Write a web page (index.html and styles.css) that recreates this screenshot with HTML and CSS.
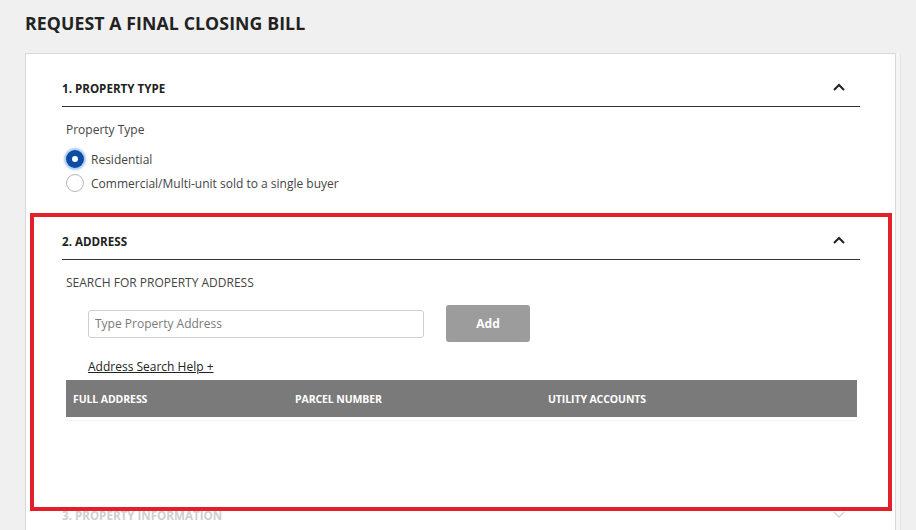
FILE: index.html
```html
<!DOCTYPE html>
<html>
<head>
<meta charset="utf-8">
<link rel="stylesheet" href="styles.css">
</head>
<body>
<div class="page">
  <h1 class="title">REQUEST A FINAL CLOSING BILL</h1>
  <div class="card">
    <section class="section">
      <div class="sec-head">
        <span>1. PROPERTY TYPE</span>
        <svg class="chev" width="12" height="8" viewBox="0 0 12 8"><polyline points="1,7 6,2 11,7" fill="none" stroke="#222" stroke-width="2"/></svg>
      </div>
      <div class="sec-body">
        <div class="label">Property Type</div>
        <div class="radios">
          <label class="radio-row"><span class="radio checked"></span><span>Residential</span></label>
          <label class="radio-row"><span class="radio"></span><span>Commercial/Multi-unit sold to a single buyer</span></label>
        </div>
      </div>
    </section>
    <section class="section section-address">
      <div class="highlight"></div>
      <div class="sec-head">
        <span>2. ADDRESS</span>
        <svg class="chev" width="12" height="8" viewBox="0 0 12 8"><polyline points="1,7 6,2 11,7" fill="none" stroke="#222" stroke-width="2"/></svg>
      </div>
      <div class="sec-body">
        <div class="label upper">SEARCH FOR PROPERTY ADDRESS</div>
        <div class="search-row">
          <input class="search-input" type="text" placeholder="Type Property Address">
          <button class="add-btn">Add</button>
        </div>
        <a class="help-link" href="#">Address Search Help +</a>
        <div class="results">
          <div class="results-head">
            <span class="col c1">FULL ADDRESS</span>
            <span class="col c2">PARCEL NUMBER</span>
            <span class="col c3">UTILITY ACCOUNTS</span>
          </div>
          <div class="results-body"></div>
        </div>
      </div>
    </section>
    <section class="section section-disabled">
      <div class="sec-head">
        <span>3. PROPERTY INFORMATION</span>
        <svg class="chev chev-down" width="12" height="8" viewBox="0 0 12 8"><polyline points="1,1 6,6 11,1" fill="none" stroke="#d4d4d4" stroke-width="1.5"/></svg>
      </div>
    </section>
  </div>
</div>
</body>
</html>
```
FILE: styles.css
```css
html, body {
  margin: 0;
  padding: 0;
  background: #f0f0f0;
  font-family: "Open Sans", "Liberation Sans", sans-serif;
  color: #222;
  overflow: hidden;
}
.page {
  padding: 0 0 0 25px;
  width: 871px;
}
.title {
  margin: 0;
  font-size: 17.7px;
  font-weight: 700;
  line-height: 24px;
  padding-top: 11px;
  height: 42px;
  color: #222;
  letter-spacing: 0.1px;
}
.card {
  background: #fff;
  border: 1px solid #d8d8d8;
  box-shadow: 4px 0 0 #f5f5f5, 5px 0 0 #e4e4e4;
  padding: 21px 35px 0 36px;
  min-height: 500px;
  box-sizing: border-box;
}
.section {
  position: relative;
}
.section + .section {
  margin-top: 33px;
}
.sec-head {
  display: flex;
  align-items: center;
  justify-content: space-between;
  height: 26px;
  padding-bottom: 5px;
  border-bottom: 1px solid #333;
  font-size: 11.6px;
  font-weight: 700;
}
.chev {
  margin-right: 15px;
  margin-top: -3px;
}
.chev-down {
  margin-top: 0;
}
.sec-body {
  padding: 14px 0 0 4px;
}
.label {
  font-size: 12px;
  line-height: 18px;
  color: #444;
}
.radios {
  margin-top: 8px;
  display: flex;
  flex-direction: column;
}
.radio-row {
  display: flex;
  align-items: center;
  height: 24px;
  font-size: 12px;
  color: #444;
  gap: 7px;
}
.radio {
  width: 18px;
  height: 18px;
  border-radius: 50%;
  border: 1px solid #b5b5b5;
  box-sizing: border-box;
  background: #fff;
  display: flex;
  align-items: center;
  justify-content: center;
}
.radio.checked {
  border: none;
  background: #0a4da3;
  box-shadow: 0 0 2px 2px rgba(110, 160, 230, 0.55);
}
.radio.checked::after {
  content: "";
  width: 6px;
  height: 6px;
  border-radius: 50%;
  background: #fff;
}
.section-address .sec-body {
  padding-top: 14px;
  padding-bottom: 48px;
}
.highlight {
  position: absolute;
  top: -15px;
  left: -32px;
  right: -32px;
  bottom: -42px;
  border: 4px solid #e3202a;
  box-sizing: border-box;
  pointer-events: none;
}
.search-row {
  margin-top: 13px;
  display: flex;
  align-items: center;
  gap: 22px;
  padding-left: 22px;
}
.search-input {
  width: 336px;
  height: 28px;
  box-sizing: border-box;
  border: 1px solid #cfcfcf;
  border-radius: 3px;
  padding: 0 6px;
  font-family: "Open Sans", "Liberation Sans", sans-serif;
  font-size: 12px;
  color: #333;
  outline: none;
}
.search-input::placeholder {
  color: #7a7a7a;
}
.add-btn {
  width: 84px;
  height: 37px;
  background: #9c9c9c;
  color: #fff;
  border: none;
  border-radius: 3px;
  font-family: "Open Sans", "Liberation Sans", sans-serif;
  font-size: 12px;
  font-weight: 700;
}
.help-link {
  display: inline-block;
  margin: 16px 0 0 22px;
  font-size: 12px;
  line-height: 18px;
  color: #222;
  text-decoration: underline;
}
.results {
  margin-top: 4px;
  margin-right: 3px;
}
.results-head {
  display: flex;
  align-items: center;
  height: 37px;
  background: #7a7a7a;
  color: #fff;
  font-size: 10.5px;
  font-weight: 700;
  letter-spacing: -0.1px;
}
.col.c1 { width: 222px; padding-left: 7px; }
.col.c2 { width: 253px; }
.col.c3 { flex: 1; }
.results-body {
  height: 3px;
  border-bottom: 1px solid #f3f3f3;
}
.section-disabled .sec-head {
  border-bottom: none;
  color: #cfcfcf;
}
```
